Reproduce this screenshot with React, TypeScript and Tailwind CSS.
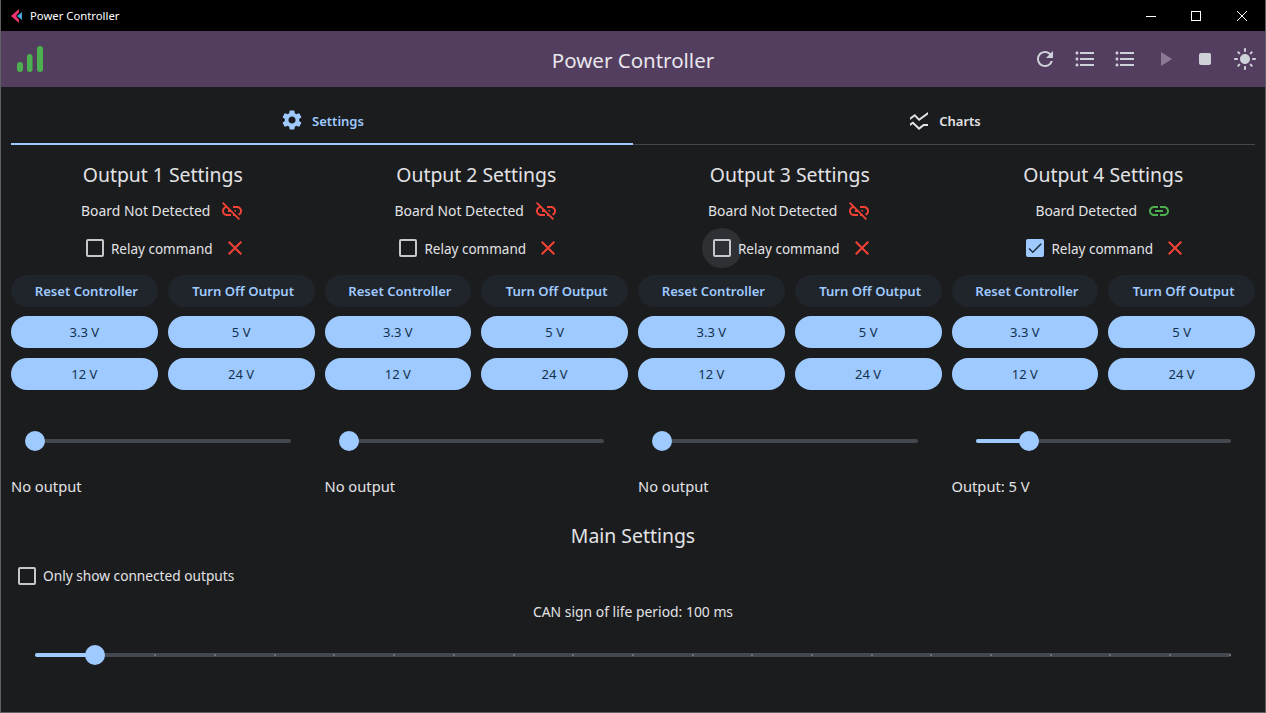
import React from "react";
import { MdSettings, MdRefresh, MdFormatListBulleted, MdPlayArrow, MdLightMode, MdSsidChart, MdLinkOff, MdLink, MdClose } from "react-icons/md";

const sans = "font-['Noto_Sans','Open_Sans',sans-serif]";

function Box({ checked }: { checked?: boolean }) {
  if (checked)
    return (
      <span className="flex h-[18px] w-[18px] items-center justify-center rounded-[2px] bg-[#9fcaff]">
        <svg viewBox="0 0 24 24" className="h-[18px] w-[18px]" fill="#1b2a3d"><path d="M9 16.2 4.8 12l-1.4 1.4L9 19 21 7l-1.4-1.4z" /></svg>
      </span>
    );
  return <span className="block h-[18px] w-[18px] rounded-[2px] border-2 border-[#c4c7cc]" />;
}

function Pill({ children, dark }: { children: React.ReactNode; dark?: boolean }) {
  return (
    <div className={dark
      ? "flex h-8 flex-1 items-center justify-center rounded-2xl bg-[#20242b] pl-[4px] pt-px text-[13.1px] font-semibold text-[#9fcaff]"
      : "flex h-8 flex-1 items-center justify-center rounded-2xl bg-[#9fcaff] pt-px text-[13px] text-[#12314f]"}>
      {children}
    </div>
  );
}

function Slider({ pct, ticks }: { pct: number; ticks?: boolean }) {
  return (
    <div className="relative h-1 rounded-sm bg-[#43484f]">
      {ticks && (
        <div className="absolute inset-0 flex items-center justify-between">
          {Array.from({ length: 21 }).map((_, i) => <span key={i} className="h-0.5 w-0.5 bg-[#6c7178]" />)}
        </div>
      )}
      <div className="absolute left-0 top-0 h-1 rounded-sm bg-[#9fcaff]" style={{ width: `${pct}%` }} />
      <div className="absolute top-1/2 h-5 w-5 -translate-x-1/2 -translate-y-1/2 rounded-full bg-[#9fcaff]" style={{ left: `${pct}%` }} />
    </div>
  );
}

function Output({ n, detected, checked, hover, pct, value }: { n: number; detected?: boolean; checked?: boolean; hover?: boolean; pct: number; value: string }) {
  return (
    <div className="flex flex-col">
      <div className="flex h-[30px] items-center justify-center text-[19.4px] leading-none text-[#e3e3e6]">Output {n} Settings</div>
      <div className="mt-[6px] flex h-[30px] items-center justify-center gap-[10px] text-[13.9px] text-[#e3e3e6]">
        <span className="pt-px">{detected ? "Board Detected" : "Board Not Detected"}</span>
        {detected ? <MdLink className="h-6 w-6 text-[#4caf50]" /> : <MdLinkOff className="h-6 w-6 text-[#f44336]" />}
      </div>
      <div className="mt-[7px] flex h-[30px] items-center justify-center pl-[7px] text-[13.5px] text-[#e3e3e6]">
        <span className="relative mr-[7px] flex h-[18px] w-[18px] items-center justify-center">
          {hover && <span className="absolute left-1/2 top-1/2 h-10 w-10 -translate-x-1/2 -translate-y-1/2 rounded-full bg-[#2e3033]" />}
          <span className="relative"><Box checked={checked} /></span>
        </span>
        <span className="relative pt-[2px]">Relay command</span>
        <MdClose className="ml-[10px] h-6 w-6 text-[#f44336]" />
      </div>
      <div className="mt-[12px] flex flex-col">
        <div className="flex gap-[10px]"><Pill dark>Reset Controller</Pill><Pill dark>Turn Off Output</Pill></div>
        <div className="mt-[9px] flex gap-[10px]"><Pill>3.3 V</Pill><Pill>5 V</Pill></div>
        <div className="mt-[10px] flex gap-[10px]"><Pill>12 V</Pill><Pill>24 V</Pill></div>
      </div>
      <div className="mt-[49px] px-6"><Slider pct={pct} /></div>
      <div className="mt-[33px] h-5 text-[14.7px] leading-5 text-[#e3e3e6]">{value}</div>
    </div>
  );
}

export default function App() {
  return (
    <div className={`${sans} flex h-[713px] w-[1266px] flex-col overflow-hidden border-x border-b border-[#5f6062] bg-[#1b1c1e]`}>
      <div className="flex h-[31px] shrink-0 items-center bg-black pl-[10px] text-white">
        <svg viewBox="0 0 12 14" className="h-[14px] w-[12px]">
          <path d="M8 0 0 7l8 7v-3L5 7l3-4z" fill="#e8336e" />
          <path d="M6 7l5-4v8z" fill="#3fa4dc" />
        </svg>
        <span className="ml-[7px] pt-px text-[11.3px]">Power Controller</span>
        <div className="flex-1" />
        <svg viewBox="0 0 10 10" className="mr-[35px] h-[10px] w-[10px]" stroke="white" fill="none"><path d="M0 5.5h10" /></svg>
        <svg viewBox="0 0 10 10" className="mr-[36px] h-[10px] w-[10px]" stroke="white" fill="none"><rect x=".5" y=".5" width="9" height="9" /></svg>
        <svg viewBox="0 0 10 10" className="mr-[18px] h-[10px] w-[10px]" stroke="white" fill="none"><path d="M0 0l10 10M10 0 0 10" /></svg>
      </div>

      <div className="relative flex h-14 shrink-0 items-center justify-center bg-[#533e5f] pt-[2px] text-[#e8e6ec]">
        <svg viewBox="0 0 28 28" className="absolute left-[15px] top-[15px] h-7 w-7" fill="#4caf50">
          <rect x="1" y="16" width="6" height="10" rx="3" />
          <rect x="11" y="8" width="5.5" height="18" rx="2.75" />
          <rect x="21" y="0" width="6" height="26" rx="3" />
        </svg>
        <span className="text-[20.5px]">Power Controller</span>
        <div className="absolute right-[8px] top-4 flex items-center gap-[16px] text-[#cfd1d8]">
          <MdRefresh className="h-6 w-6" />
          <MdFormatListBulleted className="h-6 w-6" />
          <MdFormatListBulleted className="h-6 w-6" />
          <MdPlayArrow className="h-6 w-6 text-[#8b7a95]" />
          <svg viewBox="0 0 24 24" className="h-6 w-6" fill="currentColor"><rect x="6" y="6" width="12" height="12" rx="2" /></svg>
          <MdLightMode className="h-6 w-6" />
        </div>
      </div>

      <div className="flex h-[58px] shrink-0 px-[10px] text-[13px] font-semibold">
        <div className="flex flex-1 items-center justify-center gap-[8px] border-b-2 border-[#9fcaff] pt-[10px] text-[#9fcaff]">
          <MdSettings className="h-6 w-6" /><span className="pt-[3px]">Settings</span>
        </div>
        <div className="flex flex-1 items-center justify-center gap-[8px] border-b border-[#43474e] pt-[11px] text-[#e3e3e6]">
          <MdSsidChart className="h-6 w-6" /><span className="pt-[2px]">Charts</span>
        </div>
      </div>

      <div className="grid grid-cols-4 gap-x-[10px] px-[10px] pt-[15px]">
        <Output n={1} pct={0} value="No output" />
        <Output n={2} pct={0} value="No output" />
        <Output n={3} hover pct={0} value="No output" />
        <Output n={4} detected checked pct={20.8} value="Output: 5 V" />
      </div>

      <div className="mt-[25px] text-center text-[19.4px] leading-[30px] text-[#e3e3e6]">Main Settings</div>
      <div className="mt-[10px] flex h-[30px] items-center pl-[17px] text-[13.7px] text-[#e3e3e6]">
        <Box /><span className="ml-[7px]">Only show connected outputs</span>
      </div>
      <div className="mt-[6px] h-[30px] text-center text-[13.9px] leading-[30px] text-[#e3e3e6]">CAN sign of life period: 100 ms</div>
      <div className="mt-[26px] pl-[34px] pr-[34px]"><Slider pct={5} ticks /></div>
    </div>
  );
}
